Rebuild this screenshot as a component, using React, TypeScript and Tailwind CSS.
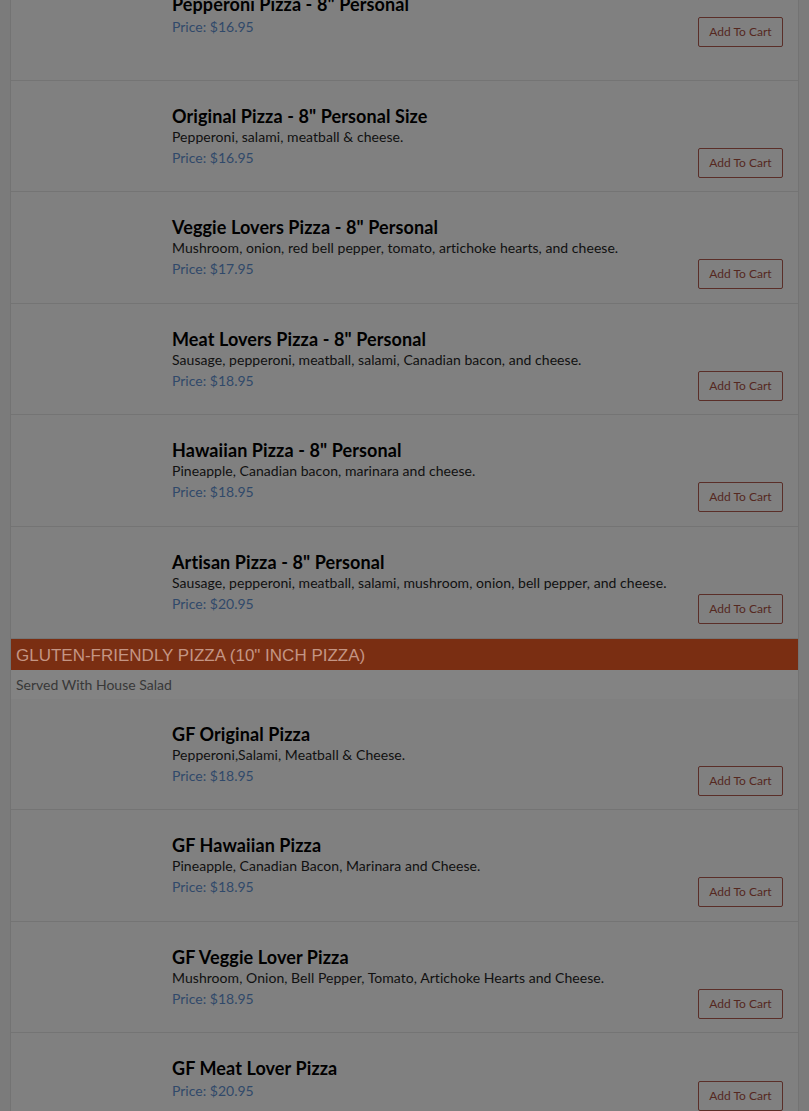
type Item = { name: string; desc?: string; price: string };

const personal: Item[] = [
	{ name: 'Pepperoni Pizza - 8" Personal', price: "16.95" },
	{ name: 'Original Pizza - 8" Personal Size', desc: "Pepperoni, salami, meatball & cheese.", price: "16.95" },
	{ name: 'Veggie Lovers Pizza - 8" Personal', desc: "Mushroom, onion, red bell pepper, tomato, artichoke hearts, and cheese.", price: "17.95" },
	{ name: 'Meat Lovers Pizza - 8" Personal', desc: "Sausage, pepperoni, meatball, salami, Canadian bacon, and cheese.", price: "18.95" },
	{ name: 'Hawaiian Pizza - 8" Personal', desc: "Pineapple, Canadian bacon, marinara and cheese.", price: "18.95" },
	{ name: 'Artisan Pizza - 8" Personal', desc: "Sausage, pepperoni, meatball, salami, mushroom, onion, bell pepper, and cheese.", price: "20.95" },
];

const glutenFree: Item[] = [
	{ name: "GF Original Pizza", desc: "Pepperoni,Salami, Meatball & Cheese.", price: "18.95" },
	{ name: "GF Hawaiian Pizza", desc: "Pineapple, Canadian Bacon, Marinara and Cheese.", price: "18.95" },
	{ name: "GF Veggie Lover Pizza", desc: "Mushroom, Onion, Bell Pepper, Tomato, Artichoke Hearts and Cheese.", price: "18.95" },
	{ name: "GF Meat Lover Pizza", price: "20.95" },
];

const MenuRow = ({ item }: { item: Item }) => (
	<div className="h-[111.6px] border-b border-[#747474] pl-[161px] pr-[15px] pt-[24px]">
		<h4 className="text-[18px] leading-[22px] font-bold tracking-[0.1px] text-black">{item.name}</h4>
		{item.desc && <p className="text-[14px] leading-[19px] tracking-[0.05px] text-[#101010]">{item.desc}</p>}
		<div className="mt-[2px] flex items-start justify-between">
			<span className="text-[14px] leading-[20px] text-[#30496a]">Price: ${item.price}</span>
			<button
				type="button"
				className="h-[30px] w-[85px] rounded-[2px] border border-[#5a2e28] text-[12px] text-[#55281f]">
				Add To Cart
			</button>
		</div>
	</div>
);

const App = () => {
	return (
		<div className="min-h-screen h-[1111px] overflow-hidden bg-[#7b7b7b] font-['Lato',sans-serif]">
			<div className="mx-[10px] -mt-[31px] border-x border-[#737373] bg-[#808080]">
				{personal.map((item) => (
					<MenuRow key={item.name} item={item} />
				))}
				{/* Gluten friendly section */}
				<div className="h-[31px] bg-[#7a2e12] px-[5px] pt-[7px] font-['Liberation_Sans',Arial,sans-serif] text-[17px] leading-[20px] text-[#c49584]">
					GLUTEN-FRIENDLY PIZZA (10" INCH PIZZA)
				</div>
				<div className="h-[29px] bg-[#838383] px-[5px] pt-[5px] text-[14px] leading-[20px] text-[#383838]">
					Served With House Salad
				</div>
				{glutenFree.map((item) => (
					<MenuRow key={item.name} item={item} />
				))}
			</div>
		</div>
	);
};

export default App;
